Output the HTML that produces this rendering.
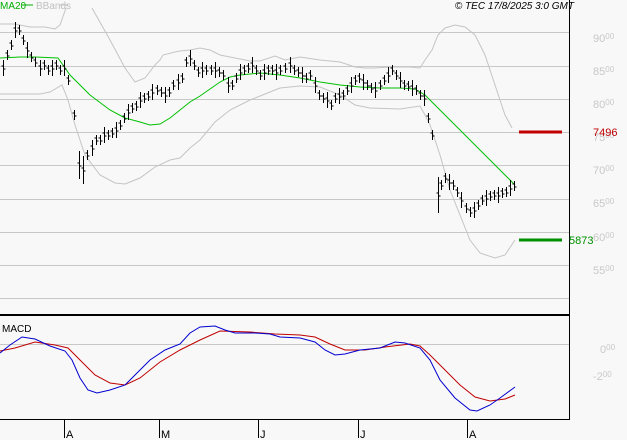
<!DOCTYPE html>
<html><head><meta charset="utf-8"><style>
body{margin:0;width:627px;height:440px;background:#f8f8f8;overflow:hidden;font-family:"Liberation Sans",sans-serif}
svg{position:absolute;left:0;top:0}
</style></head><body>
<svg id="s" width="627" height="440" xmlns="http://www.w3.org/2000/svg" font-family="Liberation Sans, sans-serif">
<rect width="627" height="440" fill="#f8f8f8"/>
<g stroke="#c8c8c8" stroke-width="1">
<line x1="0" y1="32.5" x2="569" y2="32.5"/><line x1="0" y1="66.5" x2="569" y2="66.5"/>
<line x1="0" y1="99.5" x2="569" y2="99.5"/><line x1="0" y1="132.5" x2="569" y2="132.5"/>
<line x1="0" y1="165.5" x2="569" y2="165.5"/><line x1="0" y1="199.5" x2="569" y2="199.5"/>
<line x1="0" y1="232.5" x2="569" y2="232.5"/><line x1="0" y1="265.5" x2="569" y2="265.5"/>
<line x1="0" y1="298.5" x2="569" y2="298.5"/><line x1="0" y1="344.5" x2="569" y2="344.5"/>
</g>
<g fill="none" stroke="#c4c4c4" stroke-width="1">
<polyline points="0,24 15,24 30,27 45,27 55,29 60,25 66,8"/>
<polyline points="92,8 110,40 125,68 135,82 145,78 155,65 160,60 163,55 175,52 180,51 190,50 200,48 210,50 220,55 240,59 250,61 260,61 275,56 285,60 300,57 320,60 340,62 355,67 365,68 375,68 390,67 410,67 420,68 425,60 432,50 438,35 445,28 455,25 465,27 475,35 485,55 495,85 505,115 512,128"/>
<polyline points="0,94 40,94 50,92 62,85 68,100 75,125 85,155 100,175 115,183 125,184 140,178 155,167 170,160 180,158 190,148 200,140 215,122 230,110 250,100 265,94 280,88 300,86 320,87 340,95 355,105 370,108 400,109 420,106 425,115 430,125 440,155 450,190 460,215 470,240 480,253 495,258 505,255 515,240"/>
</g>
<polyline fill="none" stroke="#00c000" stroke-width="1" points="0,58 20,57 35,57 58,58 70,75 90,95 110,110 125,118 140,122 150,125 160,124 170,118 180,110 190,102 200,96 210,89 220,82 230,77 240,75 260,73 280,75 300,78 320,82 340,85 360,87 380,88 400,88 415,89 425,95 440,110 460,130 480,150 500,170 515,185"/>
<g id="bars" stroke="#000" stroke-width="1"></g>
<line x1="519" y1="132" x2="562" y2="132" stroke="#c00000" stroke-width="3"/>
<line x1="519" y1="240" x2="562" y2="240" stroke="#009000" stroke-width="3"/>
<line x1="569.5" y1="0" x2="569.5" y2="420" stroke="#000"/>
<line x1="0" y1="315" x2="570" y2="315" stroke="#000" stroke-width="2"/>
<line x1="0" y1="419.5" x2="570" y2="419.5" stroke="#000"/>
<polyline fill="none" stroke="#c00000" points="0,351 15,348 35,342 55,345 68,348 80,360 95,375 110,383 125,385 140,378 160,362 180,350 200,340 220,331 250,332 275,334 300,335 315,337 330,344 345,350 365,350 385,347 410,344 420,346 430,355 445,370 460,385 475,397 490,401 505,399 515,395"/>
<polyline fill="none" stroke="#0000d0" points="0,353 10,345 22,337 35,339 50,346 65,351 72,360 80,378 88,390 97,393 110,390 125,385 135,375 150,360 165,350 180,344 190,333 200,327 215,326 225,330 235,333 255,333 270,334 280,337 300,338 315,342 325,350 335,355 345,354 360,350 380,348 395,342 405,343 420,348 430,360 440,380 455,398 470,410 477,411 490,405 500,398 515,387"/>
<g stroke="#000"><line x1="64.5" y1="420" x2="64.5" y2="438"/><line x1="159.5" y1="420" x2="159.5" y2="438"/><line x1="258.5" y1="420" x2="258.5" y2="438"/><line x1="358.5" y1="420" x2="358.5" y2="438"/><line x1="467.5" y1="420" x2="467.5" y2="438"/></g>
<g font-size="11" fill="#000"><text x="66" y="438">A</text><text x="161" y="438">M</text><text x="260" y="438">J</text><text x="360" y="438">J</text><text x="469" y="438">A</text></g>
<text x="2" y="332" font-size="10" fill="#000">MACD</text>
<text x="0" y="9" font-size="10" fill="#00b000">MA20</text><line x1="22" y1="5" x2="33" y2="5" stroke="#00b000"/>
<text x="36" y="9" font-size="10" fill="#c0c0c0">BBands</text><line x1="59" y1="5" x2="68" y2="5" stroke="#c0c0c0"/>
<text x="574" y="9" font-size="10" font-style="italic" fill="#000" text-anchor="end">© TEC 17/8/2025 3:0 GMT</text>
<g font-size="11" fill="#c8c8c8">
<text x="593" y="42">90<tspan font-size="8" dy="-3">00</tspan></text>
<text x="593" y="75">85<tspan font-size="8" dy="-3">00</tspan></text>
<text x="593" y="108">80<tspan font-size="8" dy="-3">00</tspan></text>
<text x="593" y="141">75<tspan font-size="8" dy="-3">00</tspan></text>
<text x="593" y="174">70<tspan font-size="8" dy="-3">00</tspan></text>
<text x="593" y="207">65<tspan font-size="8" dy="-3">00</tspan></text>
<text x="593" y="241">60<tspan font-size="8" dy="-3">00</tspan></text>
<text x="593" y="274">55<tspan font-size="8" dy="-3">00</tspan></text>
<text x="600" y="353">0<tspan font-size="8" dy="-3">00</tspan></text>
<text x="593" y="380">-2<tspan font-size="8" dy="-3">00</tspan></text>
</g>
<text x="593" y="136" font-size="11" fill="#c00000">7496</text>
<text x="569" y="244" font-size="11" fill="#009000">5873</text>
</svg>
<script>
var d=[[3,68],[7,55],[11,45],[15,30],[19,30],[23,40],[27,50],[31,57],[35,62],[40,68],[44,65],[48,70],[52,68],[56,65],[60,70],[64,68],[68,80],[74,115],[79,165],[83,170],[87,155],[92,148],[96,140],[100,140],[104,135],[108,135],[112,133],[116,130],[120,125],[124,118],[128,112],[132,108],[136,106],[140,100],[144,98],[148,96],[152,92],[157,90],[161,92],[165,95],[169,92],[173,85],[178,82],[182,78],[186,62],[190,58],[194,65],[198,72],[202,70],[206,70],[211,70],[215,70],[219,72],[223,75],[228,85],[232,85],[236,78],[240,72],[244,70],[248,68],[252,65],[256,70],[260,75],[264,72],[268,70],[272,70],[276,72],[280,70],[285,68],[290,65],[294,70],[298,72],[302,75],[306,78],[310,75],[315,85],[319,95],[323,98],[327,100],[331,105],[335,98],[339,96],[343,95],[347,90],[351,85],[355,80],[359,78],[363,82],[367,85],[371,88],[375,90],[380,85],[384,80],[388,75],[392,70],[396,75],[400,80],[404,85],[408,86],[412,88],[416,90],[420,95],[424,98],[428,118],[432,135],[438,195],[441,185],[445,178],[449,182],[453,185],[457,192],[461,200],[466,208],[470,212],[474,210],[478,205],[482,200],[486,198],[490,196],[494,195],[498,195],[502,193],[506,192],[510,188],[514,186]];
var g=document.getElementById('bars'),h='';
d.forEach(function(p,i){var x=p[0]+.5,y=p[1],r=(i%3==0)?8:5;if(p[1]>160&&p[0]<90)r=14;if(p[0]==438)r=18;h+='<line x1="'+x+'" y1="'+(y-r)+'" x2="'+x+'" y2="'+(y+r)+'"/><line x1="'+x+'" y1="'+(y+1)+'" x2="'+(x+2)+'" y2="'+(y+1)+'"/><line x1="'+(x-2)+'" y1="'+(y-2)+'" x2="'+x+'" y2="'+(y-2)+'"/>';});
g.innerHTML=h;
</script>
</body></html>
